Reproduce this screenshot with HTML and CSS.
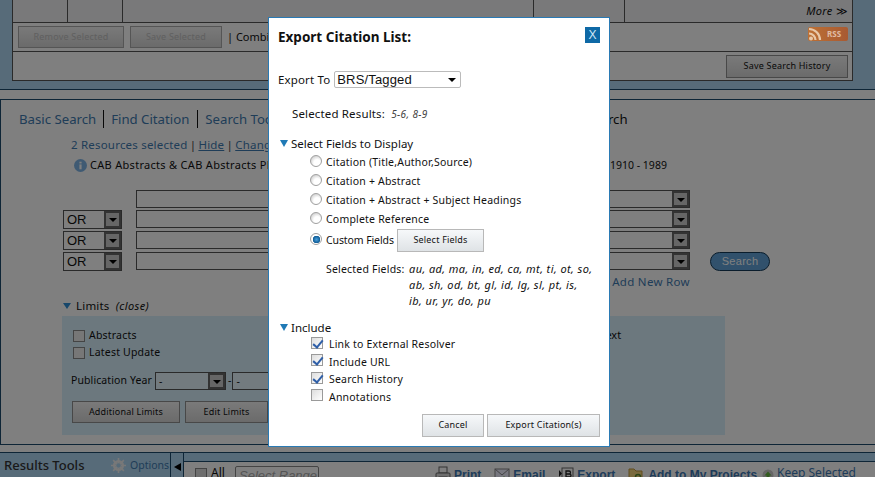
FILE: index.html
```html
<!DOCTYPE html>
<html lang="en">
<head>
<meta charset="utf-8">
<title>Export Citation List</title>
<link rel="stylesheet" href="styles.css">
</head>
<body>
<div class="page">
  <section class="top">
    <div class="results-box">
      <div class="rb-row rb-cols"><span class="c1"></span><span class="c2"></span><span class="c3"></span><span class="c4"></span><span class="c5"><em class="more">More</em> ≫</span></div>
      <div class="rb-row rb-actions">
        <button class="btn btn-off b-remove">Remove Selected</button>
        <button class="btn btn-off b-save">Save Selected</button>
        <span class="combine">| Combine Selections</span>
        <span class="rss"><svg class="rss-ico" viewBox="0 0 14 14" width="14" height="14"><circle cx="3" cy="11.5" r="2" fill="#e8c8a8"/><path d="M1 6.500a6.500 6.500 0 0 1 6.500 6.500M1 2a11 11 0 0 1 11 11" fill="none" stroke="#e8c8a8" stroke-width="2.200"/></svg><b>RSS</b></span>
      </div>
      <div class="rb-row rb-history"><button class="btn b-history">Save Search History</button></div>
    </div>
  </section>
  <div class="gap"></div>
  <section class="main">
    <nav class="tabs">
      <a class="tab">Basic Search</a><a class="tab sep">Find Citation</a><a class="tab sep">Search Tools</a><a class="tab sep">Search History</a><span class="tab-cur">Multi-Field Search</span>
    </nav>
    <p class="res-line">2 Resources selected <span class="bar">|</span> <a class="u">Hide</a> <span class="bar">|</span> <a class="u">Change</a></p>
    <p class="info-line"><svg class="info-ico" viewBox="0 0 12 12" width="13" height="13"><circle cx="6" cy="6" r="6" fill="#7fb5e6"/><rect x="5" y="5" width="2" height="4.500" fill="#fff"/><rect x="5" y="2.500" width="2" height="1.600" fill="#fff"/></svg><span class="info-a">CAB Abstracts &amp; CAB Abstracts Plus 1990 to Present</span><span class="info-b">1910 - 1989</span></p>
    <div class="q-row q1"><span class="bool-none"></span><span class="q-field"><span class="arrow"></span></span></div>
    <div class="q-row q2"><span class="bool">OR<span class="arrow"></span></span><span class="q-field"><span class="arrow"></span></span></div>
    <div class="q-row q3"><span class="bool">OR<span class="arrow"></span></span><span class="q-field"><span class="arrow"></span></span></div>
    <div class="q-row q4"><span class="bool">OR<span class="arrow"></span></span><span class="q-field"><span class="arrow"></span></span><span class="search-btn">Search</span></div>
    <div class="add-row"><a>+ Add New Row</a></div>
    <h3 class="limits-h"><i class="tri small"></i>Limits <em>(close)</em></h3>
    <div class="limits">
      <div class="lim-checks">
        <div class="lim-col">
          <label class="lim-c"><span class="box dim"></span>Abstracts</label>
          <label class="lim-c"><span class="box dim"></span>Latest Update</label>
        </div>
        <span class="fulltext">Full Text</span>
      </div>
      <div class="year">Publication Year <span class="ysel">-<span class="arrow"></span></span><span class="dash">-</span><span class="ysel">-</span></div>
      <div class="lim-btns"><button class="btn b-add">Additional Limits</button><button class="btn b-edit">Edit Limits</button></div>
    </div>
  </section>
  <div class="gap2"></div>
  <section class="bottom">
    <div class="tools"><span class="tools-t">Results Tools</span>
      <svg class="gear" viewBox="0 0 14 14" width="15" height="15"><circle cx="7" cy="7" r="4" fill="none" stroke="#f0f0f0" stroke-width="2.400"/><path d="M7 0v14M0 7h14M2 2l10 10M12 2L2 12" stroke="#f0f0f0" stroke-width="1.500"/><circle cx="7" cy="7" r="2" fill="#aed6f2"/></svg>
      <a class="opts">Options</a></div>
    <div class="collapse"><i class="tri-l"></i></div>
    <div class="bar-wrap">
      <div class="toolbar">
        <span class="box tb-box"></span><span class="all">All</span><span class="range">Select Range</span>
        <span class="tb-actions">
          <svg class="tb-i" viewBox="0 0 16 16" width="16" height="16"><rect x="4" y="1" width="8" height="6" fill="#fff" stroke="#666"/><rect x="1" y="7" width="14" height="6" rx="1" fill="#ddd" stroke="#666"/><rect x="4" y="11" width="8" height="4" fill="#fff" stroke="#666"/></svg><a class="tb-l l-print">Print</a>
          <svg class="tb-i" viewBox="0 0 16 16" width="16" height="16"><rect x="1" y="3" width="14" height="11" fill="#eef" stroke="#888"/><path d="M1 3l7 6 7-6" fill="none" stroke="#888"/><path d="M6 15l4-5 4 5z" fill="#7fc050"/></svg><a class="tb-l l-email">Email</a>
          <svg class="tb-i" viewBox="0 0 16 16" width="16" height="16"><rect x="4" y="2" width="11" height="11" fill="#fff" stroke="#666"/><path d="M1 4l3 3.500L1 11z" fill="#222"/><path d="M8 5h3a1.500 1.500 0 0 1 0 3H8zM8 8h3.500a1.500 1.500 0 0 1 0 3H8z" fill="none" stroke="#222" stroke-width="1.300"/></svg><a class="tb-l l-export">Export</a>
          <svg class="tb-i tb-i4" viewBox="0 0 16 16" width="16" height="16"><path d="M1 3h5l2 2h6v9H1z" fill="#f6d77c" stroke="#c09a40"/><circle cx="10" cy="11" r="2.500" fill="none" stroke="#5a8a30" stroke-width="1.500"/></svg><a class="tb-l l-proj">Add to My Projects</a>
          <svg class="tb-k" viewBox="0 0 12 12" width="12" height="12"><circle cx="6" cy="6" r="5.500" fill="#ccc"/><path d="M6 2.500l3.500 4H7.500V10h-3V6.500H2.500z" fill="#66b840"/></svg><a class="tb-l2">Keep Selected</a>
        </span>
      </div>
    </div>
  </section>
</div>
<div class="scrim"></div>
<div class="modal" role="dialog">
  <header class="m-head"><h2>Export Citation List:</h2><span class="close">X</span></header>
  <div class="m-export">Export To <span class="m-select">BRS/Tagged<i class="tri-d"></i></span></div>
  <div class="m-selected">Selected Results: <em>5-6, 8-9</em></div>
  <h4 class="m-sec s1"><i class="tri"></i>Select Fields to Display</h4>
  <div class="radio r1"><span class="rd"></span>Citation (Title,Author,Source)</div>
  <div class="radio"><span class="rd"></span>Citation + Abstract</div>
  <div class="radio"><span class="rd"></span>Citation + Abstract + Subject Headings</div>
  <div class="radio"><span class="rd"></span>Complete Reference</div>
  <div class="radio custom"><span class="rd on"></span><span class="custom-l">Custom Fields</span><button class="mbtn b-fields">Select Fields</button></div>
  <div class="fields"><span class="f-label">Selected Fields:</span><em class="f-list">au, ad, ma, in, ed, ca, mt, ti, ot, so, ab, sh, od, bt, gl, id, lg, sl, pt, is, ib, ur, yr, do, pu</em></div>
  <h4 class="m-sec s2"><i class="tri"></i>Include</h4>
  <div class="chk c-a"><span class="box on"></span>Link to External Resolver</div>
  <div class="chk c-b"><span class="box on"></span>Include URL</div>
  <div class="chk c-c"><span class="box on"></span>Search History</div>
  <div class="chk c-d"><span class="box"></span>Annotations</div>
  <footer class="m-foot"><button class="mbtn b-cancel">Cancel</button><button class="mbtn b-go">Export Citation(s)</button></footer>
</div>
</body>
</html>
```
FILE: styles.css
```css
* { box-sizing: border-box; }
html, body { margin: 0; height: 477px; overflow: hidden; }
body { background: #fff; font: 11px/1.2 "Noto Sans", sans-serif; color: #111; position: relative; }
p, h2, h3, h4 { margin: 0; font-weight: normal; }
button { font: inherit; padding: 0; }
.page { height: 477px; overflow: hidden; }

/* results panel */
.top { height: 90px; background: #aed6f2; padding: 0 22px 9px 12px; border-bottom: 1px solid #1c4a6c; }
.results-box { height: 81px; background: #fff; border: 1px solid #555; border-width: 0 1px 1px; }
.rb-row { border-bottom: 1px solid #555; display: flex; align-items: center; }
.rb-row:last-child { border-bottom: 0; }
.rb-cols { height: 23px; background: #f2f2f4; align-items: stretch; }
.rb-cols span { border-right: 1px solid #555; }
.c1 { width: 55px; } .c2 { width: 55px; } .c3 { width: 411px; } .c4 { width: 91px; }
.rb-cols .c5 { flex: 1; border: 0; text-align: right; padding: 4px 4px 0 0; font-size: 11px; letter-spacing: .3px; }
.rb-actions { height: 29px; padding: 0 4px 0 5px; }
.rb-history { height: 28px; justify-content: flex-end; padding-right: 4px; }
.btn { height: 23px; border: 1px solid #909090; background: linear-gradient(#f4f4f4, #d6d6d6); font-size: 9px; letter-spacing: .2px; color: #111; }
.btn-off { color: #c0c0c0; border-color: #aaa; height: 22px; }
.b-remove { width: 106px; margin-right: 6px; }
.b-save { width: 92px; margin-right: 5px; }
.combine { font-size: 11px; white-space: nowrap; }
.rss { margin: -6px 0 0 auto; width: 40px; height: 14px; border-radius: 2px; background: linear-gradient(90deg, #bd7034, #a85a32); display: flex; align-items: center; color: #e0bca4; font-size: 8px; gap: 5px; position: relative; z-index: 1; }
.rss b { font-weight: bold; }
.b-history { width: 122px; }
.gap { height: 10px; background: #fff; border-bottom: 1px solid #1c4a6c; }

/* search panel */
.main { height: 345px; background: #fff; border-left: 1px solid #1c4a6c; border-bottom: 1px solid #1c4a6c; padding: 9px 0 0 18px; }
.tabs { display: flex; height: 20px; font-size: 13.200px; align-items: center; line-height: 18px; white-space: nowrap; }
.tab { color: #3e7ab0; padding-right: 6px; }
.tab.sep { border-left: 1px solid #111; padding-left: 7px; margin-left: 1px; height: 18px; }
.tab-cur { color: #111; margin-left: 7px; }
.tabs .tab:nth-child(2) { padding-right: 7px; }
.tabs .tab:nth-child(3) { width: 126px; }
.tabs .tab:nth-child(4) { width: 186px; }
.res-line { margin: 9px 0 0 52px; font-size: 11.500px; color: #3e7ab0; white-space: nowrap; height: 16px; letter-spacing: .2px; }
.u { text-decoration: underline; }
.bar { color: #444; margin: 0 -1px; }
.info-line { display: flex; align-items: center; margin: 3px 0 0 55px; height: 16px; white-space: nowrap; font-size: 11px; letter-spacing: .3px; }
.info-ico { margin-right: 3px; }
.info-a { width: 434px; overflow: hidden; }
.info-b { margin-left: 86px; letter-spacing: 0; font-size: 10.500px; }
.q-row { display: flex; align-items: flex-start; margin-left: 44px; }
.q1 { margin-top: 17px; height: 20px; } .q2 { height: 21px; } .q3 { height: 21px; } .q4 { height: 21px; }
.bool, .bool-none { width: 59px; height: 19px; margin-right: 14px; flex: none; }
.bool { border: 1px solid #555; background: #fff; font: 13px/17px "Liberation Sans", sans-serif; padding-left: 3px; position: relative; }
.q-field { flex: none; width: 554px; height: 18px; border: 1px solid #555; background: #fff; position: relative; }
.arrow { position: absolute; right: 0; top: 0; bottom: 0; width: 17px; background: #ccc; border: 2px solid #666; }
.arrow::after { content: ""; position: absolute; left: 3px; top: 5px; border: 4px solid transparent; border-top: 4px solid #000; border-bottom: 0; }
.search-btn { margin-left: 20px; width: 60px; height: 19px; border-radius: 10px; background: #62a3d8; border: 1px solid #153a58; color: #fff; font: 11px/17px "Liberation Sans", sans-serif; text-align: center; letter-spacing: .3px; }
.add-row { margin-left: 583px; font-size: 11.500px; color: #3e7ab0; height: 16px; margin-top: 2px; letter-spacing: .3px; white-space: nowrap; }
.limits-h { margin: 8px 0 0 44px; font-size: 11.500px; height: 17px; letter-spacing: .2px; }
.limits-h em { margin-left: 3px; font-size: 11px; letter-spacing: .4px; }
.tri { display: inline-block; border: 4px solid transparent; border-top: 7px solid #1f7ab6; border-bottom: 0; margin-right: 4px; vertical-align: 1px; }
.tri.small { border-top-color: #2f8fd6; border-top-width: 6px; margin-right: 5px; vertical-align: 1px; }
.limits { margin: 0 0 0 43px; width: 663px; height: 119px; background: #d8f0fc; padding: 11px 0 0 11px; }
.lim-checks { display: flex; height: 43px; }
.lim-col { width: 506px; }
.lim-c { display: flex; align-items: center; height: 17px; font-size: 10.500px; letter-spacing: .2px; }
.box { flex: none; width: 12px; height: 12px; border: 1px solid #7f9db9; background: #fff; position: relative; display: inline-block; margin-right: 4px; }
.box.dim { border-color: #888; background: #eee; }
.fulltext { margin-top: 1px; white-space: nowrap; }
.year { display: flex; align-items: center; height: 19px; margin: 1px 0 0 -2px; font-size: 10.500px; letter-spacing: .1px; white-space: nowrap; }
.ysel { position: relative; width: 71px; height: 18px; border: 1px solid #555; background: #e6f6ff; margin-left: 3px; padding-left: 3px; line-height: 16px; }
.ysel + .dash + .ysel { margin-left: 1px; }
.dash { margin-left: 2px; }
.lim-btns { display: flex; gap: 5px; margin: 11px 0 0 -1px; }
.b-add { width: 108px; height: 22px; }
.b-edit { width: 83px; height: 22px; }
.gap2 { height: 8px; background: #fff; border-bottom: 1px solid #1c4a6c; }

/* bottom bar */
.bottom { display: flex; height: 25px; background: #aed6f2; }
.tools { width: 171px; flex: none; border-right: 1px solid #1c4a6c; display: flex; align-items: center; padding: 0 0 0 4px; height: 25px; }
.tools-t { font-size: 13px; font-weight: 500; color: #333; width: 107px; flex: none; white-space: nowrap; }
.gear { margin-right: 4px; flex: none; }
.opts { color: #3e7ab0; font-size: 10.500px; }
.collapse { width: 13px; flex: none; border-right: 1px solid #1c4a6c; }
.tri-l { display: block; margin: 10px 0 0 3px; width: 0; border: 4px solid transparent; border-right: 7px solid #000; border-left: 0; }
.bar-wrap { flex: 1; padding-top: 8px; }
.toolbar { height: 20px; background: #fff; border-top: 1px solid #1c4a6c; display: flex; align-items: flex-start; padding: 4px 0 0 11px; white-space: nowrap; }
.tb-box { margin: 2px 4px 0 0; background: #ddd; border-color: #888; }
.all { font-size: 12px; width: 24px; }
.range { width: 84px; height: 20px; border: 1px solid #888; border-radius: 2px; color: #aaa; font: italic 13px/18px "Liberation Sans", sans-serif; padding-left: 3px; overflow: hidden; }
.tb-actions { display: flex; margin-left: 116px; align-items: flex-start; }
.tb-i { flex: none; margin: 0 3px 0 0; }
.tb-i4 { margin-right: 4px; }
.tb-l { color: #3c78b4; font: bold 12px/18px "Liberation Sans", sans-serif; }
.l-print { margin-right: 13px; } .l-email { margin-right: 13px; } .l-export { margin-right: 13px; } .l-proj { margin-right: 5px; }
.tb-k { flex: none; margin: 3px 3px 0 0; }
.tb-l2 { color: #3c78b4; font-size: 12px; letter-spacing: 0; }

/* overlay and dialog */
.scrim { position: absolute; inset: 0; background: rgba(0, 0, 0, .5); }
.modal { position: absolute; left: 268px; top: 17px; width: 342px; height: 430px; background: #fff; border: 1px solid #2a7ab4; padding: 0 9px; color: #111; font-size: 10.500px; letter-spacing: .2px; }
.m-head { display: flex; justify-content: space-between; align-items: flex-start; height: 44px; padding-top: 9px; }
.m-head h2 { font-size: 13.500px; font-weight: bold; line-height: 21px; letter-spacing: 0; }
.close { width: 15px; height: 16px; background: #0e69a6; color: #cfe6f5; font: 12px/16px "Liberation Sans", sans-serif; text-align: center; }
.m-export { display: flex; align-items: center; height: 17px; margin-top: 9px; font-size: 11.500px; letter-spacing: .15px; white-space: nowrap; }
.m-select { position: relative; width: 127px; height: 17px; margin-left: 4px; border: 1px solid #bbb; border-radius: 2px; font: 13px/15px "Liberation Sans", sans-serif; padding-left: 2px; }
.tri-d { position: absolute; right: 4px; top: 6px; border: 4px solid transparent; border-top: 4px solid #000; border-bottom: 0; }
.m-selected { margin: 19px 0 0 14px; height: 18px; font-size: 11.500px; letter-spacing: .15px; }
.m-selected em { font-size: 10px; margin-left: 3px; color: #444; letter-spacing: .4px; }
.m-sec { font-size: 11.500px; height: 16px; line-height: 16px; margin-left: 2px; letter-spacing: 0; }
.m-sec .tri { margin-right: 3px; }
.s1 { margin-top: 11px; }
.s2 { margin-top: 11px; }
.radio { display: flex; align-items: center; margin-left: 32px; height: 19px; white-space: nowrap; }
.r1 { margin-top: 1px; }
.rd { width: 12px; height: 12px; border-radius: 50%; margin: -3px 4px 0 0; background: radial-gradient(circle at 62% 68%, #fff 35%, #cfcfcf 80%); border: 1px solid #a0a0a0; position: relative; }
.rd.on { background: radial-gradient(circle at 55% 55%, #4aa0dc 0, #0f5c96 3.500px, #fff 4px); }
.custom { height: 23px; }
.custom-l { letter-spacing: -.1px; width: 71px; }
.mbtn { border: 1px solid #b8b8b8; background: linear-gradient(#f6f8fa, #dfe3e6); color: #111; font-size: 9px; letter-spacing: .2px; height: 23px; }
.b-fields { width: 87px; }
.fields { display: flex; margin: 9px 0 0 48px; line-height: 16px; }
.f-label { flex: none; width: 83px; }
.f-list { width: 184px; font-size: 11px; letter-spacing: .4px; }
.chk { display: flex; align-items: center; margin-left: 33px; height: 17.500px; white-space: nowrap; }
.chk .box { width: 12px; height: 12px; margin-top: -4px; margin-right: 6px; border-color: #9a9a9a; background: linear-gradient(135deg, #ddd, #fff); }
.box.on::after { content: ""; position: absolute; left: 3px; top: 0; width: 4px; height: 8px; border: solid #2f5fa8; border-width: 0 2px 2px 0; transform: rotate(40deg); }
.m-foot { display: flex; justify-content: flex-end; gap: 3px; margin-top: 8px; }
.b-cancel { width: 62px; }
.b-go { width: 113px; }
```
